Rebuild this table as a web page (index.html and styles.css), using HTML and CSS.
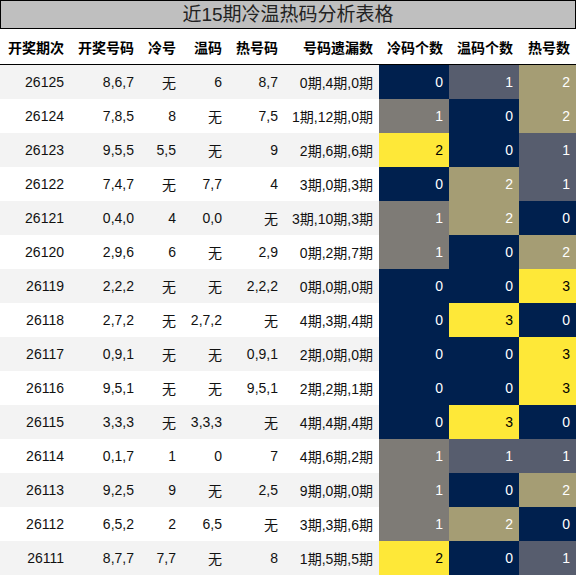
FILE: index.html
```html
<!DOCTYPE html>
<html lang="zh">

<head>
    <meta charset="UTF-8">
    <meta name="viewport" content="width=device-width, initial-scale=1.0">
    <title>近15期冷温热码分析表格</title>
    <link rel="stylesheet" href="styles.css">
</head>

<body>
    <div class="wrap">
        <div class="title">近15期冷温热码分析表格</div>

        <table class="tb">
            <colgroup>
                <col style="width: 70px">
                <col style="width: 70px">
                <col style="width: 42px">
                <col style="width: 46px">
                <col style="width: 56px">
                <col style="width: 95px">
                <col style="width: 70px">
                <col style="width: 70px">
                <col style="width: 57px">
            </colgroup>
            <thead>
                <tr>
                    <th>开奖期次</th>
                    <th>开奖号码</th>
                    <th>冷号</th>
                    <th>温码</th>
                    <th>热号码</th>
                    <th>号码遗漏数</th>
                    <th>冷码个数</th>
                    <th>温码个数</th>
                    <th>热号数</th>
                </tr>
            </thead>
            <tbody>
                <tr><td>26125</td><td>8,6,7</td><td>无</td><td>6</td><td>8,7</td><td>0期,4期,0期</td><td class="c0">0</td><td class="w1">1</td><td class="w2">2</td></tr>
                <tr><td>26124</td><td>7,8,5</td><td>8</td><td>无</td><td>7,5</td><td>1期,12期,0期</td><td class="c1">1</td><td class="c0">0</td><td class="w2">2</td></tr>
                <tr><td>26123</td><td>9,5,5</td><td>5,5</td><td>无</td><td>9</td><td>2期,6期,6期</td><td class="c3">2</td><td class="c0">0</td><td class="w1">1</td></tr>
                <tr><td>26122</td><td>7,4,7</td><td>无</td><td>7,7</td><td>4</td><td>3期,0期,3期</td><td class="c0">0</td><td class="w2">2</td><td class="w1">1</td></tr>
                <tr><td>26121</td><td>0,4,0</td><td>4</td><td>0,0</td><td>无</td><td>3期,10期,3期</td><td class="c1">1</td><td class="w2">2</td><td class="c0">0</td></tr>
                <tr><td>26120</td><td>2,9,6</td><td>6</td><td>无</td><td>2,9</td><td>0期,2期,7期</td><td class="c1">1</td><td class="c0">0</td><td class="w2">2</td></tr>
                <tr><td>26119</td><td>2,2,2</td><td>无</td><td>无</td><td>2,2,2</td><td>0期,0期,0期</td><td class="c0">0</td><td class="c0">0</td><td class="c3">3</td></tr>
                <tr><td>26118</td><td>2,7,2</td><td>无</td><td>2,7,2</td><td>无</td><td>4期,3期,4期</td><td class="c0">0</td><td class="c3">3</td><td class="c0">0</td></tr>
                <tr><td>26117</td><td>0,9,1</td><td>无</td><td>无</td><td>0,9,1</td><td>2期,0期,0期</td><td class="c0">0</td><td class="c0">0</td><td class="c3">3</td></tr>
                <tr><td>26116</td><td>9,5,1</td><td>无</td><td>无</td><td>9,5,1</td><td>2期,2期,1期</td><td class="c0">0</td><td class="c0">0</td><td class="c3">3</td></tr>
                <tr><td>26115</td><td>3,3,3</td><td>无</td><td>3,3,3</td><td>无</td><td>4期,4期,4期</td><td class="c0">0</td><td class="c3">3</td><td class="c0">0</td></tr>
                <tr><td>26114</td><td>0,1,7</td><td>1</td><td>0</td><td>7</td><td>4期,6期,2期</td><td class="c1">1</td><td class="w1">1</td><td class="w1">1</td></tr>
                <tr><td>26113</td><td>9,2,5</td><td>9</td><td>无</td><td>2,5</td><td>9期,0期,0期</td><td class="c1">1</td><td class="c0">0</td><td class="w2">2</td></tr>
                <tr><td>26112</td><td>6,5,2</td><td>2</td><td>6,5</td><td>无</td><td>3期,3期,6期</td><td class="c1">1</td><td class="w2">2</td><td class="c0">0</td></tr>
                <tr><td>26111</td><td>8,7,7</td><td>7,7</td><td>无</td><td>8</td><td>1期,5期,5期</td><td class="c3">2</td><td class="c0">0</td><td class="w1">1</td></tr>
            </tbody>
        </table>
    </div>
</body>

</html>
```

FILE: styles.css
```css
body {
    margin: 0;
    font-family: "Liberation Sans", "Noto Sans CJK SC", sans-serif;
    color: #111;
    background: #fff;
}

.wrap {
    width: 576px;
}

.title {
    height: 27px;
    border: 1px solid #000;
    background-color: #bfbfbf;
    font-size: 19px;
    line-height: 27px;
    text-align: center;
    color: #222;
}

.tb {
    width: 576px;
    border-collapse: collapse;
    table-layout: fixed;
    font-size: 14px;
}

.tb th,
.tb td {
    height: 34px;
    padding: 0 6px 0 0;
    text-align: right;
    white-space: nowrap;
}

.tb th {
    height: 35px;
    font-weight: bold;
    border-bottom: 1px solid #000;
    color: #000;
}

.tb tbody tr:nth-child(odd) {
    background-color: #f3f3f3;
}

/* 颜色 */
.c0 {
    background-color: #00204e;
    color: #fff;
}

.c1 {
    background-color: #7e7b76;
    color: #fff;
}

.w1 {
    background-color: #575d6e;
    color: #fff;
}

.w2 {
    background-color: #a59d74;
    color: #fff;
}

.c3 {
    background-color: #fee838;
    color: #000;
}
```
